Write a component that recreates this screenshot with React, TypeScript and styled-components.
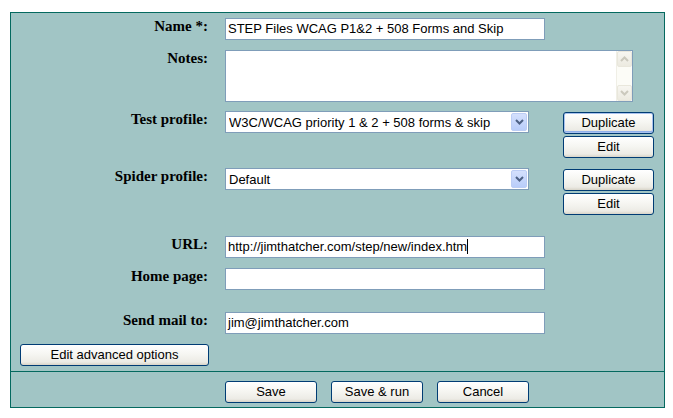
import React from "react";
import styled, { createGlobalStyle } from "styled-components";

const Global = createGlobalStyle`
  html, body { margin: 0; padding: 0; background: #ffffff; }
  body { font-family: "Liberation Sans", Arial, sans-serif; }
`;

const Page = styled.div`
  padding: 12px 0 0 10px;
`;

const Panel = styled.div`
  width: 653px;
  border: 1px solid #04695f;
  background: #a1c5c5;
`;

const Form = styled.div`
  display: flex;
  flex-direction: column;
  padding-top: 5px;
`;

const Row = styled.div<{ $h: number }>`
  display: flex;
  align-items: flex-start;
  height: ${(p) => p.$h}px;
`;

const Label = styled.div`
  width: 197px;
  margin-right: 17px;
  text-align: right;
  font-family: "Liberation Serif", "Times New Roman", serif;
  font-weight: bold;
  font-size: 15px;
  line-height: 17px;
  color: #000;
  white-space: nowrap;
`;

const TextBox = styled.div<{ $w: number }>`
  box-sizing: border-box;
  width: ${(p) => p.$w}px;
  height: 22px;
  border: 1px solid #7f9db9;
  background: #fff;
  padding: 0 2px;
  font-size: 13px;
  line-height: 20px;
  color: #000;
  white-space: nowrap;
  overflow: hidden;
`;

const Caret = styled.span`
  display: inline-block;
  width: 1px;
  height: 15px;
  background: #000;
  vertical-align: -3px;
`;

const TextArea = styled.div`
  box-sizing: border-box;
  width: 408px;
  height: 52px;
  border: 1px solid #7f9db9;
  background: #fff;
  display: flex;
  justify-content: flex-end;
`;

const ScrollBar = styled.div`
  width: 16px;
  height: 100%;
  background: #fcfcf7;
  border-left: 1px solid #f0efe6;
  box-sizing: border-box;
  display: flex;
  flex-direction: column;
  justify-content: space-between;
`;

const ScrollBtn = styled.div`
  width: 15px;
  height: 16px;
  box-sizing: border-box;
  border: 1px solid #e9e7dc;
  border-radius: 2px;
  background: linear-gradient(#f7f6f1, #eceae0);
  display: flex;
  align-items: center;
  justify-content: center;
`;

const Select = styled.div`
  box-sizing: border-box;
  width: 304px;
  height: 22px;
  border: 1px solid #7f9db9;
  background: #fff;
  display: flex;
  align-items: center;
  padding: 0 1px 0 3px;
  font-size: 13px;
  color: #000;
`;

const SelectText = styled.span`
  flex: 1;
  white-space: nowrap;
  overflow: hidden;
`;

const DropBtn = styled.div`
  width: 16px;
  height: 18px;
  box-sizing: border-box;
  border: 1px solid #bccdf5;
  border-radius: 2px;
  background: linear-gradient(#d4e0fd, #b9cdfa);
  display: flex;
  align-items: center;
  justify-content: center;
`;

const ButtonStack = styled.div`
  display: flex;
  flex-direction: column;
  gap: 2px;
  margin-left: 34px;
  margin-top: 1px;
`;

const Button = styled.button<{ $w: number; $focus?: boolean }>`
  box-sizing: border-box;
  width: ${(p) => p.$w}px;
  height: 22px;
  padding: 0;
  border: 1px solid #003c74;
  border-radius: 3px;
  background: linear-gradient(#ffffff 0%, #f6f6f2 45%, #ecebe5 85%, #d8d4c8 100%);
  font-family: "Liberation Sans", Arial, sans-serif;
  font-size: 13px;
  line-height: 20px;
  color: #000;
  box-shadow: ${(p) =>
    p.$focus ? "inset 0 0 0 1px #a9c2ee, inset 0 -1px 0 1px #90b0ea" : "none"};
`;

const AdvancedRow = styled.div`
  height: 27px;
  padding-left: 9px;
`;

const Divider = styled.div`
  height: 1px;
  background: #04695f;
`;

const Footer = styled.div`
  display: flex;
  gap: 14px;
  padding: 9px 0 4px 214px;
`;

const Chevron = ({ color, up }: { color: string; up?: boolean }) => (
  <svg width="9" height="6" viewBox="0 0 9 6">
    <path
      d={up ? "M1 5 L4.5 1.5 L8 5" : "M1 1 L4.5 4.5 L8 1"}
      fill="none"
      stroke={color}
      strokeWidth="2"
    />
  </svg>
);

const Dropdown = ({ value }: { value: string }) => (
  <Select>
    <SelectText>{value}</SelectText>
    <DropBtn>
      <Chevron color="#4d6185" />
    </DropBtn>
  </Select>
);

export default function App() {
  return (
    <>
      <Global />
      <Page>
        <Panel>
          <Form>
            <Row $h={32}>
              <Label>Name *:</Label>
              <TextBox $w={320}>STEP Files WCAG P1&amp;2 + 508 Forms and Skip</TextBox>
            </Row>
            <Row $h={61}>
              <Label>Notes:</Label>
              <TextArea>
                <ScrollBar>
                  <ScrollBtn>
                    <Chevron color="#cbc9bd" up />
                  </ScrollBtn>
                  <ScrollBtn>
                    <Chevron color="#cbc9bd" />
                  </ScrollBtn>
                </ScrollBar>
              </TextArea>
            </Row>
            <Row $h={57}>
              <Label>Test profile:</Label>
              <Dropdown value="W3C/WCAG priority 1 & 2 + 508 forms & skip" />
              <ButtonStack>
                <Button $w={91} $focus>Duplicate</Button>
                <Button $w={91}>Edit</Button>
              </ButtonStack>
            </Row>
            <Row $h={68}>
              <Label>Spider profile:</Label>
              <Dropdown value="Default" />
              <ButtonStack>
                <Button $w={91}>Duplicate</Button>
                <Button $w={91}>Edit</Button>
              </ButtonStack>
            </Row>
            <Row $h={32}>
              <Label>URL:</Label>
              <TextBox $w={320}>
                http://jimthatcher.com/step/new/index.htm
                <Caret />
              </TextBox>
            </Row>
            <Row $h={44}>
              <Label>Home page:</Label>
              <TextBox $w={320} />
            </Row>
            <Row $h={32}>
              <Label>Send mail to:</Label>
              <TextBox $w={320}>jim@jimthatcher.com</TextBox>
            </Row>
            <AdvancedRow>
              <Button $w={189}>Edit advanced options</Button>
            </AdvancedRow>
          </Form>
          <Divider />
          <Footer>
            <Button $w={92}>Save</Button>
            <Button $w={92}>Save &amp; run</Button>
            <Button $w={92}>Cancel</Button>
          </Footer>
        </Panel>
      </Page>
    </>
  );
}
